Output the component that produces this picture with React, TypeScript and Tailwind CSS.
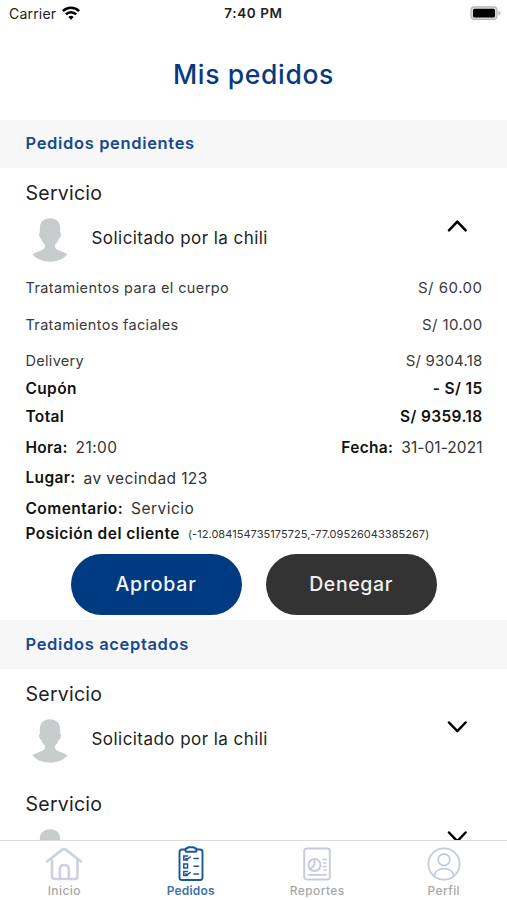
import React, {useState} from 'react';

const prices = [
  {label: 'Tratamientos para el cuerpo', labelClass: 'tracking-[0.4px]', value: 'S/ 60.00', valueClass: 'tracking-[0.5px]', row: 'mb-[17px]'},
  {label: 'Tratamientos faciales', labelClass: 'tracking-[0.32px]', value: 'S/ 10.00', valueClass: 'tracking-[0.4px]', row: 'mb-4'},
  {label: 'Delivery', labelClass: 'tracking-[0.3px]', value: 'S/ 9304.18', valueClass: 'tracking-[0.2px]', row: 'mb-1'},
];

const Avatar = () => (
  <svg className="w-9 h-[44px]" viewBox="0 0 36 44" fill="#c9cccc">
    <path d="M18 .3C11.500.3 7.800 4.500 7.800 10.500v4.300c-.9.400-.9 1.800-.5 3.200.4 1.400 1 2.600 1.900 2.700.6 2.300 1.900 4.200 3.600 5.500v3.600C12.300 32 5 33 .4 36.600 4.500 41 10.500 43.700 18 43.700s13.500-2.700 17.500-7.100C31 33 23.700 32 23.200 29.800v-3.600c1.700-1.300 3-3.200 3.600-5.500.9-.1 1.500-1.300 1.900-2.700.4-1.400.4-2.800-.5-3.200v-4.300C28.200 4.500 24.500.3 18 .3z" />
  </svg>
);

const Chevron = ({open}: {open: boolean}) => (
  <svg className="w-5 h-3" viewBox="0 0 20 12" fill="none" stroke="#000" strokeWidth="2.500" strokeLinecap="round" strokeLinejoin="round">
    <path d={open ? 'M2 10.300 10.300 1.600l8.300 8.700' : 'M2 1.500 10.300 10.200l8.300-8.700'} />
  </svg>
);

const OrderHeader = ({open, onToggle}: {open: boolean; onToggle: () => void}) => (
  <div className="h-[110px] pl-[25.500px] pr-[40px] pt-[11px] shrink-0">
    <h3 className="h-7 leading-7 text-[19.500px] tracking-[0.25px] text-[#222]">Servicio</h3>
    <div className="flex mt-[11px]">
      <div className="w-12 pl-[6px]">
        <Avatar />
      </div>
      <p className="ml-[18px] mt-2 leading-6 text-[17px] tracking-[0.45px] text-[#222]">Solicitado por la chili</p>
      <button type="button" onClick={onToggle} aria-label="Detalle" className="cursor-pointer ml-auto self-start mt-[2px]">
        <Chevron open={open} />
      </button>
    </div>
  </div>
);

const SectionTitle = ({children}: {children: React.ReactNode}) => (
  <h2 className="h-12 leading-[47px] pl-[25.500px] shrink-0 bg-[#f7f7f7] text-[#174a8c] font-semibold text-[16.500px] tracking-[0.65px]">{children}</h2>
);

const HomeIcon = () => (
  <svg className="w-[38px] h-[34px]" viewBox="0 0 38 34" fill="none" stroke="#ccd1e1" strokeWidth="2.600" strokeLinecap="round" strokeLinejoin="round">
    <path d="M2 14.500 17.300 2.600q1.700-1.200 3.400 0L36 14.500" />
    <path d="M7 13v16q0 3 3 3h20q2.500 0 2.500-3V13" />
    <path d="M14.800 31.500V22.500q0-4.500 4.500-4.500t4.500 4.500v9" />
  </svg>
);

const OrdersIcon = () => (
  <svg className="w-[26px] h-[35px]" viewBox="0 0 26 35" fill="none" stroke="#1a5798" strokeWidth="1.900" strokeLinecap="round" strokeLinejoin="round">
    <path d="M7.500 3.500H4q-2.500 0-2.500 2.500v25.500Q1.500 34 4 34h18q2.500 0 2.500-2.500V6q0-2.500-2.500-2.500h-3.500" />
    <path d="M9.500 2.200q0-1 1-1h5q1 0 1 1h1q1 0 1 1v1.600q0 1-1 1h-9q-1 0-1-1V3.200q0-1 1-1z" />
    <g strokeWidth="1.500" strokeLinejoin="miter">
      <path d="M9.500 14H5.800v-4h3.700M7.800 12.200l1.200 1.200 3.300-2.400M16 12.500h4.500" />
      <path d="M5.800 18h3.700v4H5.800zM16 20.300h4.500" />
      <path d="M9.500 29.500H5.800v-4h3.700M7.800 27.700l1.200 1.200 3.300-2.400M16 28h4.500" />
    </g>
  </svg>
);

const ReportsIcon = () => (
  <svg className="w-7 h-[34px]" viewBox="0 0 28 34" fill="none" stroke="#c5cbdf" strokeWidth="1.900" strokeLinecap="round" strokeLinejoin="round">
    <rect x="1.200" y="1.500" width="25.600" height="31" rx="2.500" />
    <circle cx="11.500" cy="18" r="6" />
    <path d="M11.500 12v6l-4.300 4.300" />
    <path d="M20 12.500h3M21 16h2M20 19.500h3M21 23h2M5.500 27.800H23" strokeWidth="1.700" />
  </svg>
);

const ProfileIcon = () => (
  <svg className="w-[34px] h-[34px]" viewBox="0 0 34 34" fill="none" stroke="#c5cbdf" strokeWidth="1.800">
    <circle cx="17" cy="17" r="15.600" />
    <circle cx="17" cy="12.800" r="5.800" />
    <path d="M7.300 29c.4-4.500 4.300-7.300 9.700-7.300s9.300 2.800 9.700 7.300" />
  </svg>
);

const tabs = [
  {key: 'inicio', label: 'Inicio', icon: <HomeIcon />},
  {key: 'pedidos', label: 'Pedidos', icon: <OrdersIcon />},
  {key: 'reportes', label: 'Reportes', icon: <ReportsIcon />},
  {key: 'perfil', label: 'Perfil', icon: <ProfileIcon />},
];

const App = () => {
  const [open, setOpen] = useState<Record<string, boolean>>({pending: true});
  const [tab, setTab] = useState('pedidos');

  const toggle = (key: string) => setOpen(prev => ({...prev, [key]: !prev[key]}));

  return (
    <div className="w-[507px] h-[900px] flex flex-col bg-white overflow-hidden font-['Inter',sans-serif]">
      <header className="h-[120px] shrink-0">
        <div className="h-[26px] grid grid-cols-3 items-center text-[14px] text-[#222]">
          <div className="flex items-center gap-[6px] pl-[9px]">
            <span className="pt-px tracking-[0.2px]">Carrier</span>
            <svg className="w-[18px] h-[14px]" viewBox="0 0 18 14" fill="none" stroke="#000" strokeWidth="2.600">
              <path d="M.9 5.100a11.500 11.500 0 0 1 16.200 0" />
              <path d="M3.900 8.400a7.200 7.200 0 0 1 10.200 0" />
              <path d="M9 13.700 6.300 11a3.900 3.900 0 0 1 5.400 0z" fill="#000" stroke="none" />
            </svg>
          </div>
          <span className="pt-px text-center font-semibold text-[13.500px] tracking-[0.6px]">7:40 PM</span>
          <svg className="w-[31px] h-[14px] justify-self-end mr-[6px]" viewBox="0 0 31 14">
            <rect x="1" y=".8" width="26" height="12.600" rx="3.500" fill="#ddd" stroke="#b4b4b4" strokeWidth="1.200" />
            <rect x="3" y="2.700" width="22" height="8.800" rx="1.500" fill="#000" />
            <path d="M28.500 4.700q2 .7 2 2.400t-2 2.400z" fill="#b4b4b4" />
          </svg>
        </div>
        <h1 className="mt-7 text-center text-[26.500px] leading-10 font-medium tracking-[0.65px] text-[#083a82]">Mis pedidos</h1>
      </header>

      <main className="flex-1 min-h-0 overflow-hidden flex flex-col">
        <SectionTitle>Pedidos pendientes</SectionTitle>
        <OrderHeader open={!!open.pending} onToggle={() => toggle('pending')} />
        {open.pending && (
          <div className="h-[342px] shrink-0 pl-[25.500px] pr-[24.500px] text-[15.500px] text-[#111]">
            {prices.map(p => (
              <div key={p.label} className={`flex justify-between h-5 leading-5 text-[14.500px] text-[#3a3a3a] ${p.row}`}>
                <span className={p.labelClass}>{p.label}</span>
                <span className={`text-[15px] ${p.valueClass}`}>{p.value}</span>
              </div>
            ))}
            <div className="flex justify-between h-7 leading-7 font-semibold tracking-[0.35px]">
              <span>Cupón</span>
              <span>- S/ 15</span>
            </div>
            <div className="flex justify-between h-7 leading-7 font-semibold tracking-[0.35px]">
              <span>Total</span>
              <span>S/ 9359.18</span>
            </div>
            <div className="flex justify-between h-8 leading-8 pt-px">
              <div className="flex gap-2">
                <span className="font-semibold tracking-[0.25px]">Hora:</span>
                <span className="text-[#333] tracking-[0.4px]">21:00</span>
              </div>
              <div className="flex gap-2">
                <span className="font-semibold tracking-[0.3px]">Fecha:</span>
                <span className="text-[#333] tracking-[0.05px]">31-01-2021</span>
              </div>
            </div>
            <div className="flex gap-2 h-[30px] leading-[30px]">
              <span className="font-semibold tracking-[0.35px]">Lugar:</span>
              <span className="pt-px text-[#333] tracking-[0.4px]">av vecindad 123</span>
            </div>
            <div className="flex gap-2 h-[30px] leading-[30px] pt-px">
              <span className="font-semibold tracking-[0.45px]">Comentario:</span>
              <span className="text-[#333] tracking-[0.45px]">Servicio</span>
            </div>
            <div className="flex gap-2 h-5 leading-5 pt-px">
              <span className="font-semibold tracking-[0.48px]">Posición del cliente</span>
              <span className="text-[11px] text-[#333] tracking-[0.05px]">(-12.084154735175725,-77.09526043385267)</span>
            </div>
            <div className="flex gap-6 mt-[11px] pl-[45px]">
              <button type="button" className="cursor-pointer w-[171px] h-[61px] rounded-full bg-[#003a80] text-[#f4f6f9] text-[19.500px] font-medium tracking-[0.75px]">
                Aprobar
              </button>
              <button type="button" className="cursor-pointer w-[171px] h-[61px] rounded-full bg-[#333] text-[#f0f0f0] text-[19.500px] font-medium tracking-[0.6px]">
                Denegar
              </button>
            </div>
          </div>
        )}
        <div className="h-px shrink-0 bg-[#f7f7f7]" />
        <SectionTitle>Pedidos aceptados</SectionTitle>
        <OrderHeader open={!!open.first} onToggle={() => toggle('first')} />
        <OrderHeader open={!!open.second} onToggle={() => toggle('second')} />
      </main>

      <nav className="h-[60px] shrink-0 border-t border-[#dcdcdc] bg-white grid grid-cols-4 pl-px">
        {tabs.map(t => (
          <button key={t.key} type="button" onClick={() => setTab(t.key)} className="cursor-pointer flex flex-col items-center pt-[5px]">
            <span className="h-[35px] flex items-center">{t.icon}</span>
            <span className={`mt-[2px] text-[12px] leading-4 ${tab === t.key ? 'font-semibold tracking-[0.2px] text-[#3d72b0]' : 'font-medium tracking-[0.4px] text-[#a8a8a8]'}`}>{t.label}</span>
          </button>
        ))}
      </nav>
    </div>
  );
};

export default App;
